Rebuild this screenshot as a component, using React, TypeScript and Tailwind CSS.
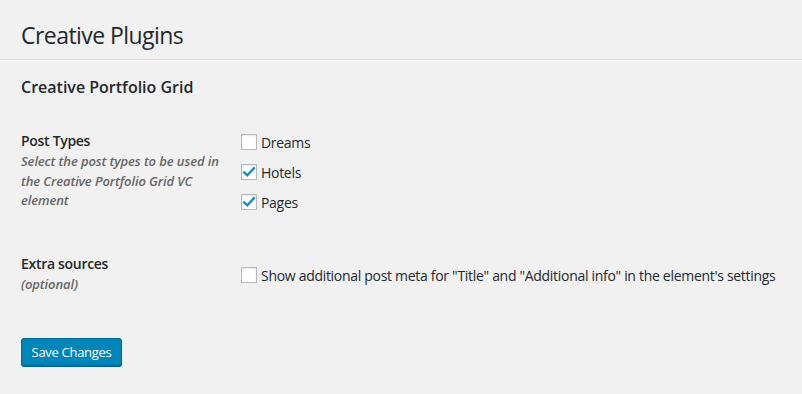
const font = { fontFamily: '"Open Sans", "Noto Sans", sans-serif' };

function Check() {
  return (
    <svg viewBox="0 0 16 16" className="absolute left-[-1px] top-[-1px] w-4 h-4">
      <path d="M3.2 8.4 L6.3 11.3 L12.9 4.2" fill="none" stroke="#1e8cbe" strokeWidth="2.4" strokeLinecap="square" strokeLinejoin="miter" />
    </svg>
  );
}

function Box({ checked }: { checked?: boolean }) {
  return (
    <span className="relative inline-block w-4 h-4 shrink-0 bg-white border border-[#b4b9be] shadow-[inset_0_1px_2px_rgba(0,0,0,0.1)]">
      {checked && <Check />}
    </span>
  );
}

export default function App() {
  const types = [
    { label: "Dreams", checked: false },
    { label: "Hotels", checked: true },
    { label: "Pages", checked: true },
  ];

  return (
    <div className="w-[802px] h-[394px] bg-[#f1f1f1] text-[#23282d] overflow-hidden" style={font}>
      <div className="pt-[20px] pl-[21px]">
        <h1 className="text-[23px] leading-[30px] font-normal tracking-[-0.55px]">Creative Plugins</h1>
        <div className="mt-[9px] -ml-[21px] border-b border-[#dcdcdc] shadow-[0_1px_0_#fff]" />

        <h2 className="mt-[15px] text-[16px] leading-[24px] font-semibold tracking-[0px]">Creative Portfolio Grid</h2>

        <div className="mt-[32px] flex">
          <div className="w-[220px] shrink-0 pr-[10px]">
            <div className="text-[14px] leading-[20px] font-semibold tracking-[-0.3px]">Post Types</div>
            <p className="mt-[1px] text-[13px] leading-[19.5px] italic font-semibold text-[#666] tracking-[-0.1px]">
              Select the post types to be used in the Creative Portfolio Grid VC element
            </p>
          </div>
          <div className="flex flex-col gap-[10px] pt-[1px]">
            {types.map((t) => (
              <label key={t.label} className="flex items-center gap-[4px] h-[20px] text-[14px] tracking-[-0.3px]">
                <Box checked={t.checked} />
                {t.label}
              </label>
            ))}
          </div>
        </div>

        <div className="mt-[42px] flex">
          <div className="w-[220px] shrink-0 pr-[10px]">
            <div className="text-[14px] leading-[20px] font-semibold tracking-[-0.3px]">Extra sources</div>
            <p className="text-[13px] leading-[20px] italic font-semibold text-[#666] tracking-[-0.1px]">(optional)</p>
          </div>
          <label className="flex items-center gap-[4px] h-[20px] mt-[11px] text-[14px] tracking-[-0.3px]">
            <Box />
            Show additional post meta for "Title" and "Additional info" in the element's settings
          </label>
        </div>

        <button className="mt-[44px] h-[28px] w-[101px] rounded-[3px] bg-[#0085ba] border border-[#006799] shadow-[0_1px_0_#006799] text-white text-[13px] tracking-[-0.3px] leading-[26px]">
          Save Changes
        </button>
      </div>
    </div>
  );
}
